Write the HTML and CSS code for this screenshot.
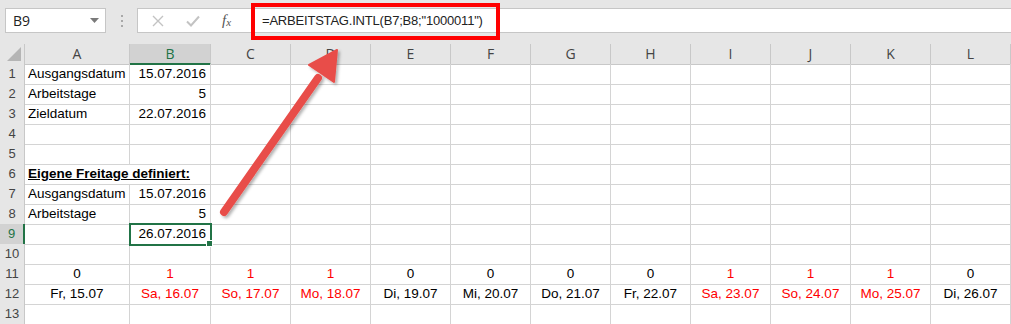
FILE: index.html
```html
<!DOCTYPE html>
<html lang="de">
<head>
    <meta charset="UTF-8">
    <title>ARBEITSTAG.INTL</title>
    <link rel="stylesheet" href="styles.css">
</head>
<body>
    <div id="app">
        <div class="toolbar">
            <div class="namebox">
                <span>B9</span>
                <svg class="drop" width="9" height="5" viewBox="0 0 9 5"><path d="M0 0h9L4.5 5z" fill="#7a7a7a"/></svg>
            </div>
            <div class="grip"><i></i><i></i><i></i></div>
            <div class="formula">
                <div class="fbtns">
                    <svg width="12" height="12" viewBox="0 0 12 12"><path d="M1 1l10 10M11 1L1 11" stroke="#c3c3c3" stroke-width="1.4"/></svg>
                    <svg width="14" height="12" viewBox="0 0 14 12"><path d="M1 6.5l4 4L13 1.5" stroke="#c3c3c3" stroke-width="2" fill="none"/></svg>
                    <span class="fx">f<sub>x</sub></span>
                </div>
                <div class="ftext">=ARBEITSTAG.INTL(B7;B8;"1000011")</div>
            </div>
        </div>

        <div class="sheet">
            <div class="row head">
                <div class="corner"><svg width="14" height="14" viewBox="0 0 14 14"><path d="M14 0v14H0z" fill="#b5b5b5"/></svg></div>
                <div>A</div><div class="sel">B</div><div>C</div><div>D</div><div>E</div><div>F</div><div>G</div><div>H</div><div>I</div><div>J</div><div>K</div><div>L</div>
            </div>
            <div class="row">
                <div class="rh">1</div><div class="l">Ausgangsdatum</div><div class="r">15.07.2016</div><div></div><div></div><div></div><div></div><div></div><div></div><div></div><div></div><div></div><div></div>
            </div>
            <div class="row">
                <div class="rh">2</div><div class="l">Arbeitstage</div><div class="r">5</div><div></div><div></div><div></div><div></div><div></div><div></div><div></div><div></div><div></div><div></div>
            </div>
            <div class="row">
                <div class="rh">3</div><div class="l">Zieldatum</div><div class="r">22.07.2016</div><div></div><div></div><div></div><div></div><div></div><div></div><div></div><div></div><div></div><div></div>
            </div>
            <div class="row">
                <div class="rh">4</div><div></div><div></div><div></div><div></div><div></div><div></div><div></div><div></div><div></div><div></div><div></div><div></div>
            </div>
            <div class="row">
                <div class="rh">5</div><div></div><div></div><div></div><div></div><div></div><div></div><div></div><div></div><div></div><div></div><div></div><div></div>
            </div>
            <div class="row">
                <div class="rh">6</div><div class="l over"><b>Eigene Freitage definiert:</b></div><div></div><div></div><div></div><div></div><div></div><div></div><div></div><div></div><div></div><div></div><div></div>
            </div>
            <div class="row">
                <div class="rh">7</div><div class="l">Ausgangsdatum</div><div class="r">15.07.2016</div><div></div><div></div><div></div><div></div><div></div><div></div><div></div><div></div><div></div><div></div>
            </div>
            <div class="row">
                <div class="rh">8</div><div class="l">Arbeitstage</div><div class="r">5</div><div></div><div></div><div></div><div></div><div></div><div></div><div></div><div></div><div></div><div></div>
            </div>
            <div class="row">
                <div class="rh active">9</div><div></div><div class="r cur">26.07.2016</div><div></div><div></div><div></div><div></div><div></div><div></div><div></div><div></div><div></div><div></div>
            </div>
            <div class="row">
                <div class="rh">10</div><div></div><div></div><div></div><div></div><div></div><div></div><div></div><div></div><div></div><div></div><div></div><div></div>
            </div>
            <div class="row mid">
                <div class="rh">11</div><div>0</div><div class="red">1</div><div class="red">1</div><div class="red">1</div><div>0</div><div>0</div><div>0</div><div>0</div><div class="red">1</div><div class="red">1</div><div class="red">1</div><div>0</div>
            </div>
            <div class="row mid">
                <div class="rh">12</div><div>Fr, 15.07</div><div class="red">Sa, 16.07</div><div class="red">So, 17.07</div><div class="red">Mo, 18.07</div><div>Di, 19.07</div><div>Mi, 20.07</div><div>Do, 21.07</div><div>Fr, 22.07</div><div class="red">Sa, 23.07</div><div class="red">So, 24.07</div><div class="red">Mo, 25.07</div><div>Di, 26.07</div>
            </div>
            <div class="row">
                <div class="rh">13</div><div></div><div></div><div></div><div></div><div></div><div></div><div></div><div></div><div></div><div></div><div></div><div></div>
            </div>
        </div>

        <!-- Markierung fuer die Formel -->
        <div class="mark"></div>
        <svg class="arrow" width="1011" height="324" viewBox="0 0 1011 324">
            <defs>
                <filter id="sh" x="-20%" y="-20%" width="140%" height="140%">
                    <feDropShadow dx="2" dy="2" stdDeviation="1.5" flood-color="#000" flood-opacity="0.3"/>
                </filter>
            </defs>
            <g filter="url(#sh)" fill="#e84e4a" stroke="#e84e4a">
                <line x1="224" y1="212" x2="318" y2="78" stroke-width="8" stroke-linecap="round"/>
                <path d="M337 50L309 65L334 82z" stroke-width="2" stroke-linejoin="round"/>
            </g>
        </svg>
    </div>
</body>
</html>
```

FILE: styles.css
```css
html,
body {
    margin: 0;
    padding: 0;
}

body {
    width: 1011px;
    height: 324px;
    overflow: hidden;
    background: #fff;
}

#app {
    position: relative;
    width: 1011px;
    height: 324px;
    font-family: "Liberation Sans", Arial, sans-serif;
}

.toolbar {
    height: 44px;
    background: #e6e6e6;
    display: flex;
    align-items: flex-start;
    padding-top: 8px;
    box-sizing: border-box;
}

.namebox {
    margin-left: 5px;
    width: 101px;
    height: 25px;
    box-sizing: border-box;
    background: #fff;
    border: 1px solid #c6c6c6;
    display: flex;
    align-items: center;
    justify-content: space-between;
    padding: 0 6px 0 7px;
    font: 14px "Open Sans", "Liberation Sans", sans-serif;
    color: #222;
}

.grip {
    width: 31px;
    height: 25px;
    display: flex;
    flex-direction: column;
    align-items: center;
    justify-content: center;
    gap: 3px;
}

.grip i {
    display: block;
    width: 2px;
    height: 2px;
    background: #a8a8a8;
}

.formula {
    flex: 1;
    height: 25px;
    box-sizing: border-box;
    background: #fff;
    border: 1px solid #c6c6c6;
    border-right: 0;
    display: flex;
    align-items: center;
}

.fbtns {
    width: 113px;
    display: flex;
    align-items: center;
    gap: 0;
    padding-left: 14px;
    box-sizing: border-box;
}

.fbtns svg:nth-child(2) {
    margin-left: 22px;
}

.fx {
    margin-left: 22px;
    font: italic 15px "Liberation Serif", serif;
    color: #555;
}

.fx sub {
    font-size: 11px;
    vertical-align: -1px;
}

.ftext {
    padding-left: 11px;
    font: 13px "Liberation Sans", sans-serif;
    letter-spacing: -0.2px;
    color: #222;
    white-space: nowrap;
}

.sheet {
    display: flex;
    flex-direction: column;
}

.row {
    display: grid;
    grid-template-columns: 25px 105px 81px repeat(10, 80px);
    height: 20px;
}

.row > div {
    box-sizing: border-box;
    border-right: 1px solid #d4d4d4;
    border-bottom: 1px solid #d4d4d4;
    font-size: 13.5px;
    line-height: 20px;
    white-space: nowrap;
    color: #000;
}

.head > div {
    background: #e6e6e6;
    border-right: 1px solid #c8c8c8;
    border-bottom: 1px solid #c8c8c8;
    text-align: center;
    color: #444;
    font: 14px/19px "Open Sans", "Liberation Sans", sans-serif;
}

.head .sel {
    background: #d2d2d2;
    color: #217346;
    border-bottom: 2px solid #217346;
}

.corner {
    display: flex;
    align-items: flex-end;
    justify-content: flex-end;
    padding: 0 3px 3px 0;
}

.corner svg {
    display: block;
}

.row > .rh {
    background: #e6e6e6;
    border-right: 1px solid #c8c8c8;
    border-bottom: 1px solid #c8c8c8;
    text-align: center;
    color: #444;
    font-size: 13px;
}

.row > .rh.active {
    background: #d2d2d2;
    color: #217346;
    border-right: 2px solid #217346;
}

.l {
    padding-left: 3px;
}

.over {
    overflow: visible;
    position: relative;
    z-index: 1;
    border-right-color: transparent !important;
}

.over b {
    text-decoration: underline;
}

.r {
    text-align: right;
    padding-right: 4px;
}

.mid > div {
    text-align: center;
}

.row > .red {
    color: #ff0000;
}

.row > .cur {
    position: relative;
    outline: 2px solid #217346;
    outline-offset: -1px;
}

.cur::after {
    content: "";
    position: absolute;
    right: -3px;
    bottom: -3px;
    width: 5px;
    height: 5px;
    background: #217346;
    border: 1px solid #fff;
}

.mark {
    position: absolute;
    left: 251px;
    top: 3px;
    width: 249px;
    height: 37px;
    box-sizing: border-box;
    border: 4px solid #ff0000;
}

.arrow {
    position: absolute;
    left: 0;
    top: 0;
    pointer-events: none;
}
```
